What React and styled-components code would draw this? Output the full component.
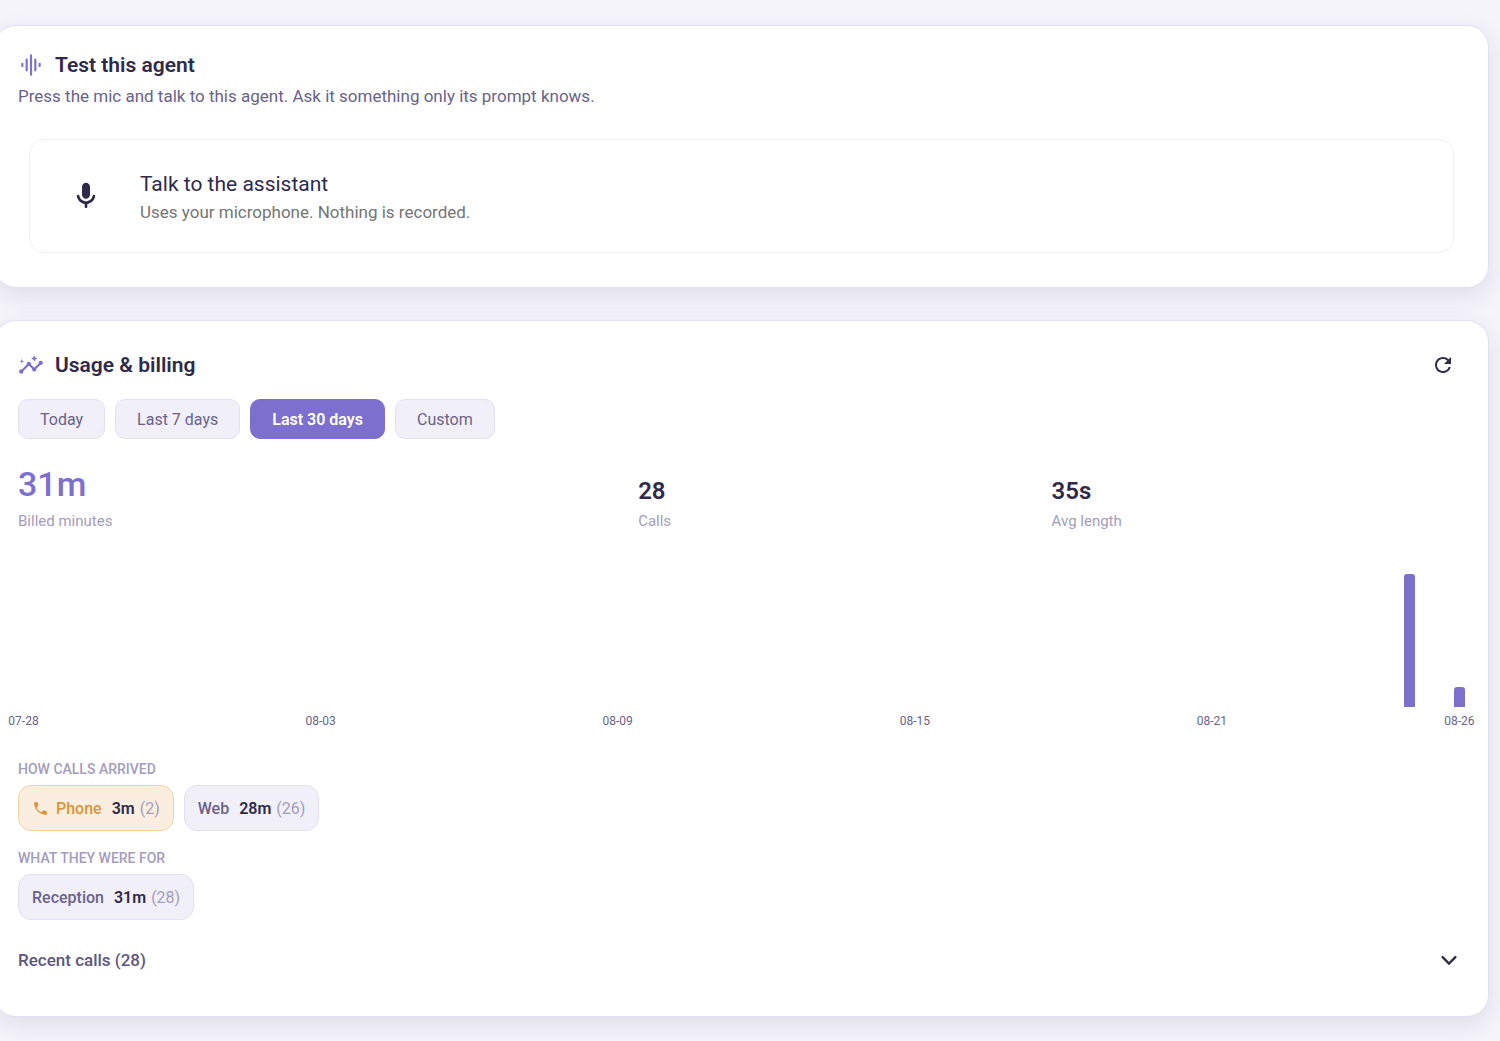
import React, { useState } from "react";
import styled, { createGlobalStyle, css } from "styled-components";
import { MdInsights, MdPhone, MdRefresh } from "react-icons/md";

const GlobalStyle = createGlobalStyle`
  * { box-sizing: border-box; }
  body {
    margin: 0;
    min-height: 100vh;
    overflow-x: hidden;
    background: #f5f4fb;
    color: #2f2a4a;
    font-family: Roboto, "Liberation Sans", sans-serif;
  }
  button { font-family: inherit; cursor: pointer; }
  h1, h2, h3, p, dl, dt, dd { margin: 0; }
`;

const Page = styled.main`
  display: flex;
  flex-direction: column;
  gap: 32px;
  margin-left: -6px;
  padding: 25px 11px 24px 0;
`;

const Card = styled.section`
  padding: 24px 23px;
  background: #fff;
  border: 1px solid #e3e0f1;
  border-radius: 22px;
  box-shadow: 0 8px 24px rgba(44, 36, 64, 0.1);
`;

const CardHeader = styled.header`
  display: flex;
  align-items: center;
  justify-content: space-between;
  height: ${(p) => p.$height};
`;

const CardTitle = styled.h2`
  display: flex;
  align-items: center;
  gap: 11px;
  font-size: 21px;
  line-height: 28px;
  font-weight: 600;

  svg { color: #7c6fcd; }
`;

const Subtitle = styled.p`
  margin-top: 4px;
  font-size: 17px;
  line-height: 24px;
  color: #69638a;
`;

const TalkPanel = styled.button`
  display: flex;
  align-items: center;
  gap: 38px;
  width: calc(100% - 22px);
  height: 114px;
  margin: 31px 11px 10px;
  padding: 0 40px;
  text-align: left;
  background: #fff;
  border: 1px solid #f1f0f7;
  border-radius: 15px;
  color: #2f2a4a;
`;

const TalkText = styled.span`
  display: flex;
  flex-direction: column;
  gap: 2px;
  padding-top: 2px;
`;

const TalkTitle = styled.span`
  font-size: 21px;
  line-height: 28px;
`;

const TalkNote = styled.span`
  font-size: 17px;
  line-height: 24px;
  color: #757575;
`;

const IconButton = styled.button`
  display: grid;
  place-items: center;
  width: 40px;
  height: 40px;
  margin-right: 2px;
  padding: 0;
  border: 0;
  background: none;
  color: #2f2a4a;
`;

const Ranges = styled.div`
  display: flex;
  gap: 10px;
  margin-top: 14px;
`;

const RangeButton = styled.button`
  height: 40px;
  padding: 0 21px;
  border: 1px solid #e3e0f1;
  border-radius: 10px;
  background: #f1eff8;
  color: #69638a;
  font-size: 16px;
  ${(p) =>
    p.$active &&
    css`
      border-color: #7c6fcd;
      background: #7c6fcd;
      color: #fff;
      font-weight: 600;
    `}
`;

const Stats = styled.dl`
  display: grid;
  grid-template-columns: 3fr 2fr 2fr;
  align-items: end;
  margin-top: 24px;
`;

const Stat = styled.div`
  display: flex;
  flex-direction: column-reverse;
  gap: 7px;
`;

const StatLabel = styled.dt`
  font-size: 15px;
  line-height: 18px;
  color: #a29dbd;
`;

const StatValue = styled.dd`
  font-size: ${(p) => (p.$primary ? "34px" : "24px")};
  line-height: ${(p) => (p.$primary ? "42px" : "28px")};
  font-weight: ${(p) => (p.$primary ? 500 : 600)};
  color: ${(p) => (p.$primary ? "#7c6fcd" : "#2f2a4a")};
`;

const Chart = styled.div`
  display: flex;
  justify-content: space-between;
  margin-top: 32px;
`;

const Day = styled.div`
  display: flex;
  flex-direction: column;
  align-items: center;
  width: 11px;
`;

const Plot = styled.div`
  display: flex;
  align-items: flex-end;
  height: 145px;
`;

const Bar = styled.div`
  width: 11px;
  border-radius: 3px 3px 0 0;
  background: #7c6fcd;
`;

const DayLabel = styled.span`
  height: 16px;
  margin-top: 6px;
  font-size: 12px;
  line-height: 16px;
  white-space: nowrap;
  color: #69638a;
`;

const Group = styled.section`
  margin-top: ${(p) => p.$space};
`;

const GroupTitle = styled.h3`
  font-size: 14px;
  line-height: 18px;
  font-weight: 500;
  color: #a29dbd;
`;

const Tags = styled.div`
  display: flex;
  gap: 10px;
  margin-top: 7px;
`;

const Tag = styled.div`
  display: flex;
  align-items: center;
  height: 46px;
  padding: 1px 13px 0;
  border: 1px solid ${(p) => (p.$warm ? "#f0d3a4" : "#e3e0f1")};
  border-radius: 13px;
  background: ${(p) => (p.$warm ? "#faeee0" : "#f1eff8")};
  color: ${(p) => (p.$warm ? "#d9953c" : "#69638a")};
  font-size: 16px;
  line-height: 20px;

  svg { margin-right: 7px; }
`;

const TagName = styled.span`
  font-weight: 500;
`;

const TagValue = styled.span`
  margin: 0 5px 0 10px;
  font-weight: 600;
  color: #2f2a4a;
`;

const TagCount = styled.span`
  color: #a29dbd;
`;

const RecentToggle = styled.button`
  display: flex;
  align-items: center;
  justify-content: space-between;
  width: 100%;
  height: 64px;
  margin-top: 8px;
  padding: 0 2px 0 0;
  border: 0;
  background: none;
  color: #5c5680;
  font-size: 17px;
  font-weight: 500;

  svg { color: #2f2a4a; }
`;

const EqualizerIcon = () => (
  <svg width="26" height="26" viewBox="0 0 24 24" fill="none" stroke="currentColor" strokeWidth="2" strokeLinecap="round" aria-hidden="true">
    <path d="M4 11v2M8 7v10M12 3v18M16 7v10M20 11v2" />
  </svg>
);

const MicIcon = () => (
  <svg width="32" height="32" viewBox="0 0 24 24" fill="currentColor" aria-hidden="true">
    <path d="M12 14c1.66 0 3-1.34 3-3V5c0-1.66-1.34-3-3-3S9 3.34 9 5v6c0 1.66 1.34 3 3 3zm5.91-3c-.49 0-.9.36-.98.85C16.52 14.2 14.47 16 12 16s-4.52-1.8-4.93-4.15c-.08-.49-.49-.85-.98-.85-.61 0-1.09.54-1 1.14.49 3 2.89 5.35 5.91 5.78V20c0 .55.45 1 1 1s1-.45 1-1v-2.08c3.02-.43 5.42-2.78 5.91-5.78.1-.6-.39-1.14-1-1.14z" />
  </svg>
);

const ChevronIcon = () => (
  <svg width="28" height="28" viewBox="0 0 24 24" fill="none" stroke="currentColor" strokeWidth="2" strokeLinecap="round" strokeLinejoin="miter" aria-hidden="true">
    <path d="M6.5 9.5L12 15l5.500-5.500" />
  </svg>
);

const ranges = ["Today", "Last 7 days", "Last 30 days", "Custom"];

const stats = [
  { label: "Billed minutes", value: "31m", primary: true },
  { label: "Calls", value: "28" },
  { label: "Avg length", value: "35s" },
];

const minutesByDate = { "08-25": 27, "08-26": 4 };
const PEAK_HEIGHT = 133;

const days = Array.from({ length: 30 }, (_, i) => {
  const date = new Date(Date.UTC(2025, 6, 28 + i));
  const key = date.toISOString().slice(5, 10);
  return { key, labelled: i % 6 === 0 || i === 29, minutes: minutesByDate[key] || 0 };
});

export default function App() {
  const [range, setRange] = useState("Last 30 days");
  const peak = Math.max(...days.map((d) => d.minutes));

  return (
    <>
      <GlobalStyle />
      <Page>
        <Card>
          <CardHeader $height="30px">
            <CardTitle><EqualizerIcon />Test this agent</CardTitle>
          </CardHeader>
          <Subtitle>Press the mic and talk to this agent. Ask it something only its prompt knows.</Subtitle>
          <TalkPanel type="button">
            <MicIcon />
            <TalkText>
              <TalkTitle>Talk to the assistant</TalkTitle>
              <TalkNote>Uses your microphone. Nothing is recorded.</TalkNote>
            </TalkText>
          </TalkPanel>
        </Card>

        <Card>
          <CardHeader $height="40px">
            <CardTitle><MdInsights size={26} aria-hidden="true" />Usage &amp; billing</CardTitle>
            <IconButton type="button" aria-label="Refresh"><MdRefresh size={24} aria-hidden="true" /></IconButton>
          </CardHeader>
          <Ranges>
            {ranges.map((name) => (
              <RangeButton key={name} type="button" $active={name === range} aria-pressed={name === range} onClick={() => setRange(name)}>
                {name}
              </RangeButton>
            ))}
          </Ranges>
          <Stats>
            {stats.map((s) => (
              <Stat key={s.label}>
                <StatLabel>{s.label}</StatLabel>
                <StatValue $primary={s.primary}>{s.value}</StatValue>
              </Stat>
            ))}
          </Stats>
          <Chart>
            {days.map((d) => (
              <Day key={d.key}>
                <Plot>
                  <Bar style={{ height: Math.round((d.minutes / peak) * PEAK_HEIGHT) }} />
                </Plot>
                <DayLabel>{d.labelled ? d.key : ""}</DayLabel>
              </Day>
            ))}
          </Chart>
          <Group $space="31px">
            <GroupTitle>HOW CALLS ARRIVED</GroupTitle>
            <Tags>
              <Tag $warm>
                <MdPhone size={17} aria-hidden="true" />
                <TagName>Phone</TagName><TagValue>3m</TagValue><TagCount>(2)</TagCount>
              </Tag>
              <Tag>
                <TagName>Web</TagName><TagValue>28m</TagValue><TagCount>(26)</TagCount>
              </Tag>
            </Tags>
          </Group>
          <Group $space="18px">
            <GroupTitle>WHAT THEY WERE FOR</GroupTitle>
            <Tags>
              <Tag>
                <TagName>Reception</TagName><TagValue>31m</TagValue><TagCount>(28)</TagCount>
              </Tag>
            </Tags>
          </Group>
          <RecentToggle type="button" aria-expanded="false">
            Recent calls (28)
            <ChevronIcon />
          </RecentToggle>
        </Card>
      </Page>
    </>
  );
}
